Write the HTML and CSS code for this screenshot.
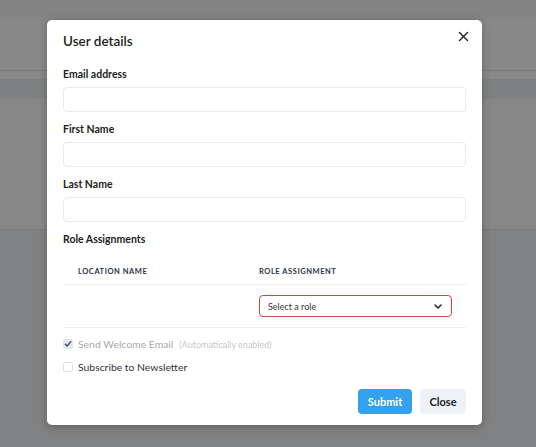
FILE: index.html
```html
<!DOCTYPE html>
<html>
<head>
<meta charset="utf-8">
<link rel="stylesheet" href="styles.css">
</head>
<body>
<div class="page">
  <div class="band b1"></div>
  <div class="band b2"></div>
  <div class="band line"></div>
  <div class="band b3"></div>
  <div class="band b4"></div>
  <div class="band b5"></div>
  <div class="band line"></div>
  <div class="band b6"></div>
</div>
<div class="overlay">
  <div class="modal">
    <div class="modal-head">
      <h2 class="title">User details</h2>
      <button class="close-x" aria-label="Close">
        <svg width="11" height="11" viewBox="0 0 11 11"><path d="M1.5 1.5 L9.5 9.5 M9.5 1.5 L1.5 9.5" stroke="#222" stroke-width="1.4" fill="none" stroke-linecap="round"/></svg>
      </button>
    </div>
    <div class="field">
      <label class="label">Email address</label>
      <div class="input"></div>
    </div>
    <div class="field">
      <label class="label">First Name</label>
      <div class="input"></div>
    </div>
    <div class="field">
      <label class="label">Last Name</label>
      <div class="input"></div>
    </div>
    <div class="label">Role Assignments</div>
    <div class="table">
      <div class="th">Location Name</div>
      <div class="th">Role Assignment</div>
      <div class="td"></div>
      <div class="td">
        <div class="select">
          <span>Select a role</span>
          <svg width="8" height="5" viewBox="0 0 8 5"><path d="M1 1 L4 4 L7 1" stroke="#222" stroke-width="1.5" fill="none" stroke-linecap="round" stroke-linejoin="round"/></svg>
        </div>
      </div>
    </div>
    <div class="checks">
      <div class="check disabled">
        <span class="box checked">
          <svg width="8" height="8" viewBox="0 0 8 8"><path d="M1.3 4.2 L3.2 6 L6.8 1.6" stroke="#3b4a6b" stroke-width="1.3" fill="none" stroke-linecap="round" stroke-linejoin="round"/></svg>
        </span>
        <span class="check-text">Send Welcome Email</span>
        <span class="hint">(Automatically enabled)</span>
      </div>
      <div class="check">
        <span class="box"></span>
        <span class="check-text">Subscribe to Newsletter</span>
      </div>
    </div>
    <div class="actions">
      <button class="btn primary">Submit</button>
      <button class="btn secondary">Close</button>
    </div>
  </div>
</div>
</body>
</html>
```

FILE: styles.css
```css
* { box-sizing: border-box; }
html, body { margin: 0; padding: 0; }
body {
  width: 536px;
  height: 447px;
  overflow: hidden;
  font-family: Lato, "Noto Sans", sans-serif;
  background: #808182;
  position: relative;
}
.page { display: flex; flex-direction: column; }
.band { width: 100%; }
.b1 { height: 20px; background: #848484; }
.b2 { height: 50px; background: #888888; }
.line { height: 1px; background: #7b7b7b; }
.b3 { height: 8px; background: #888888; }
.b4 { height: 20px; background: #7f8081; }
.b5 { height: 130px; background: #878787; }
.b6 { height: 217px; background: #808182; }

.overlay {
  position: absolute;
  inset: 0;
  padding: 20px 0 0 47px;
}
.modal {
  width: 435px;
  height: 405px;
  background: #fff;
  border-radius: 5px;
  box-shadow: 0 2px 8px rgba(0,0,0,0.25);
  padding: 10px 16px 11px 16px;
  display: flex;
  flex-direction: column;
  color: #222;
}
.modal-head {
  display: flex;
  justify-content: space-between;
  align-items: flex-start;
  margin-bottom: 14px;
}
.title {
  margin: 0;
  font-size: 13.5px;
  font-weight: 600;
  line-height: 22px;
  color: #1e1e1e;
}
.close-x {
  border: 0;
  background: none;
  padding: 0;
  margin: 1px -3px 0 0;
  width: 11px;
  height: 11px;
  display: flex;
}
.field { display: flex; flex-direction: column; }
.label {
  font-size: 10.5px;
  font-weight: 700;
  line-height: 16px;
  color: #222;
  margin-bottom: 5px;
}
.input {
  height: 25px;
  border: 1px solid #e8eaed;
  border-radius: 4px;
  margin-bottom: 9px;
}
.table {
  display: grid;
  grid-template-columns: 196px 1fr;
  margin-top: 7px;
}
.th {
  font-size: 7.5px;
  font-weight: 700;
  letter-spacing: 0.55px;
  text-transform: uppercase;
  color: #2a3245;
  height: 26px;
  display: flex;
  align-items: center;
  padding-left: 15px;
  border-bottom: 1px solid #eef0f2;
}
.th + .th { padding-left: 0; }
.td {
  height: 43px;
  display: flex;
  align-items: center;
  border-bottom: 1px solid #eef0f2;
}
.select {
  width: 193px;
  height: 22px;
  border: 1.5px solid #c84a3e;
  border-radius: 4px;
  display: flex;
  align-items: center;
  justify-content: space-between;
  padding: 0 9px 0 8px;
  font-size: 9px;
  color: #333;
}
.checks {
  display: flex;
  flex-direction: column;
  gap: 7px;
  margin-top: 8px;
}
.check {
  display: flex;
  align-items: center;
  height: 16px;
  font-size: 10.4px;
  color: #333;
}
.box {
  width: 10px;
  height: 10px;
  border: 1px solid #dfe2e6;
  border-radius: 2px;
  margin-right: 5px;
  display: flex;
  align-items: center;
  justify-content: center;
}
.box.checked { background: #e4e7ee; border-color: #e4e7ee; }
.disabled .check-text { color: #a9a9a9; }
.hint { font-size: 9px; color: #c8c8c8; margin-left: 6px; }
.actions {
  display: flex;
  justify-content: flex-end;
  gap: 8px;
  margin-top: auto;
}
.btn {
  height: 25px;
  border: 0;
  border-radius: 4px;
  font-family: inherit;
  font-size: 11px;
  font-weight: 700;
  padding: 0;
}
.primary { background: #34a1ef; color: #fff; width: 54px; }
.secondary { background: #eef1f6; color: #222; width: 46px; }
```
